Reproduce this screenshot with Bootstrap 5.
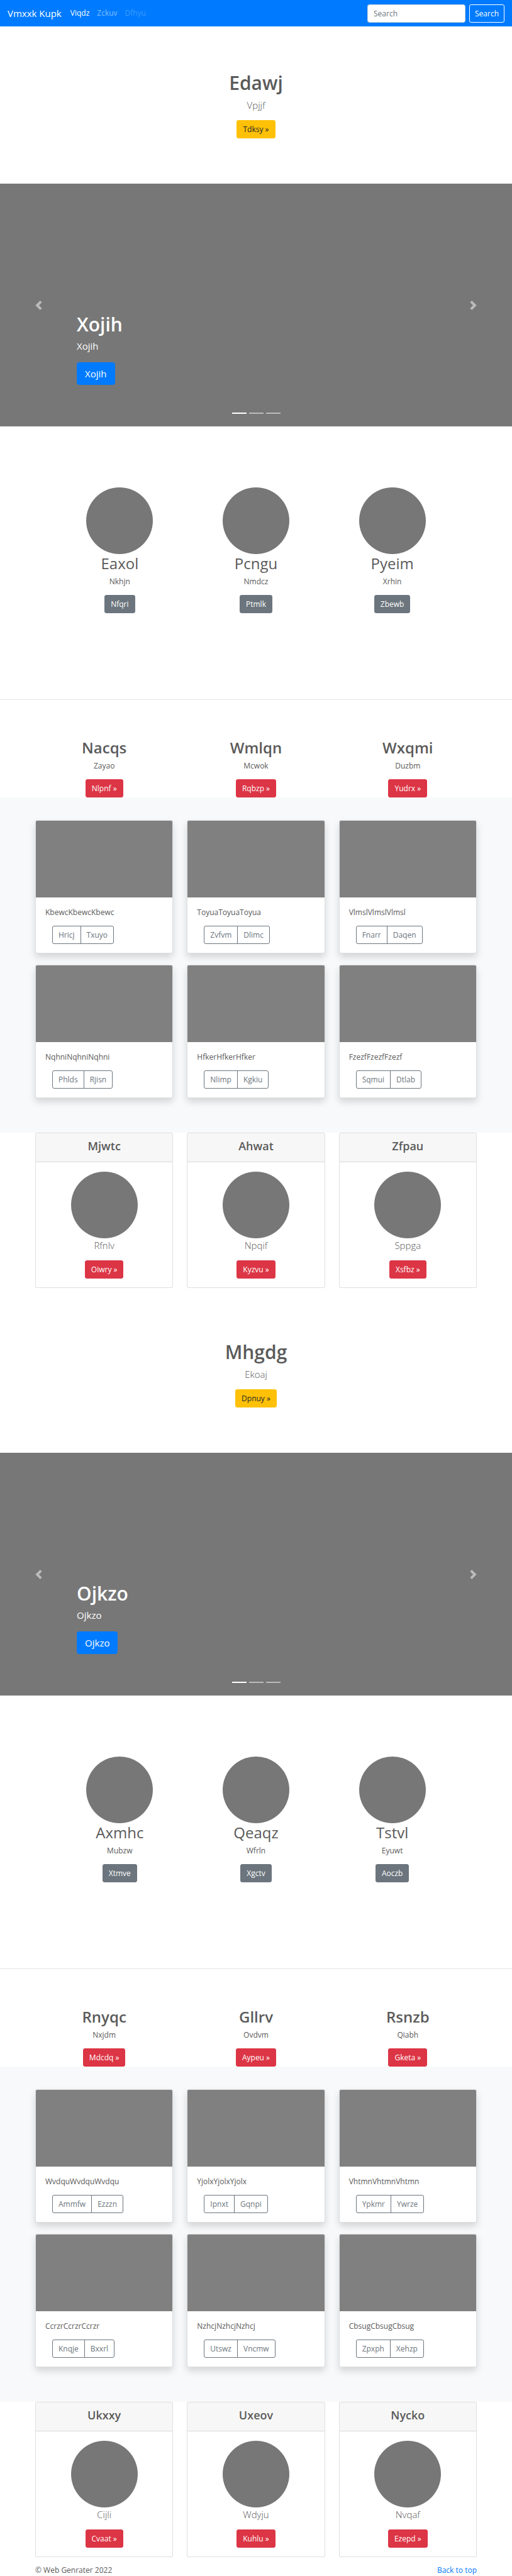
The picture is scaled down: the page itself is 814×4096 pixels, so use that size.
<!DOCTYPE html>
<html lang="en">
<head>
<meta charset="utf-8">
<meta name="viewport" content="width=device-width, initial-scale=1">
<title>Vmxxk Kupk</title>
<link href="https://cdn.jsdelivr.net/npm/bootstrap@5.3.0/dist/css/bootstrap.min.css" rel="stylesheet">
<style>
html { font-size: 12px; }
body { font-family: "Open Sans", "Noto Sans", sans-serif; font-size: 12px; line-height: 18px; color: #5a5a5a; background: #fff; }
p { margin-bottom: 12px; }
.site-width { width: 100%; max-width: 724px; margin: 0 auto; padding: 0 11px; }
.row { --bs-gutter-x: 22px; }
h1 { font-size: 30px; line-height: 36px; font-weight: 600; margin-bottom: 6px; }
h2 { font-size: 24px; line-height: 29px; font-weight: 400; margin-bottom: 6px; }
.lead { font-size: 15px; line-height: 23px; font-weight: 300; }

.btn { font-size: 12px; line-height: 19px; padding: 4px 9px; border-radius: 3px; vertical-align: top; }
.btn-lg { font-size: 15px; line-height: 22px; padding: 6px 12px; border-radius: 4px; }
.btn-primary { background: #007bff; border-color: #007bff; }
.btn-warning { background: #ffc107; border-color: #ffc107; color: #212529; }
.btn-danger { background: #dc3545; border-color: #dc3545; }
.btn-secondary { background: #6c757d; border-color: #6c757d; }

.top-bar { background: #007bff; padding: 6px 12px; height: 42px; }
.top-bar .navbar-brand { font-size: 15px; line-height: 22px; padding: 4px 0; margin-right: 8px; }
.top-bar .nav-link { padding: 6px; color: rgba(255,255,255,.5); }
.top-bar .nav-link.active { color: #fff; }
.top-bar .nav-link.disabled { color: rgba(255,255,255,.25); }
.top-bar .form-control { font-size: 12px; line-height: 19px; padding: 4px 9px; width: 156px; border-color: #ced4da; border-radius: 3px; }
.top-bar .form-control::placeholder { color: #6c757d; }
.top-bar .btn { padding: 4px 8px; }

.hero { padding: 72px 0; }

.slider { background: #777; height: 386px; }
.slider .carousel-caption { left: 15%; right: 15%; bottom: 66px; padding: 0; text-align: left; }
.slider .carousel-caption p { font-size: 15px; line-height: 21px; margin-bottom: 15px; }
.slider .carousel-control-prev svg, .slider .carousel-control-next svg { width: 15px; height: 15px; fill: #fff; }
.slider .carousel-indicators { margin-bottom: 12px; gap: 4px; }
.slider .carousel-indicators [data-bs-target] { width: 23px; height: 2px; margin: 0; border-top: 8px solid transparent; border-bottom: 8px solid transparent; }

.dot { display: block; width: 106px; height: 106px; margin: 0 auto; fill: #777; }
.people { padding: 97px 0 137px; }
.people .row { max-width: 650px; margin: 0 auto; }
.divider { margin: 0 0 61px; border-top: 1px solid #e5e5e5; opacity: 1; }
.topics h2 { font-weight: 600; }

.album { background: #f8f9fa; padding: 36px 0 37px; }
.album .card { margin-bottom: 18px; border-radius: 3px; border-color: rgba(0,0,0,.125); box-shadow: 0 6px 12px rgba(0,0,0,.15); }
.thumb { display: block; width: 100%; height: 122px; background: gray; border-radius: 2px 2px 0 0; }
.album .card-body { padding: 15px 15px 14px; }
.album .btn-group { margin-left: 11px; }
.album .btn { color: #6c757d; border-color: #6c757d; }

.plans .card { border-radius: 3px; border-color: rgba(0,0,0,.125); margin-bottom: 12px; }
.plans .card-header { padding: 9px 15px 8px; background: #f7f7f7; border-color: rgba(0,0,0,.125); }
.plans h4 { font-size: 18px; line-height: 22px; font-weight: 600; margin-bottom: 6px; }
.plans .card-body { padding: 15px 15px 14px; }
footer a { color: #007bff; text-decoration: none; }
</style>
</head>
<body>
<svg class="d-none" aria-hidden="true">
  <symbol id="circle" viewBox="0 0 100 100"><circle cx="50" cy="50" r="50"/></symbol>
  <symbol id="prev" viewBox="0 0 8 8"><path d="M5.25 0l-4 4 4 4 1.5-1.5L4.25 4l2.5-2.5L5.25 0z"/></symbol>
  <symbol id="next" viewBox="0 0 8 8"><path d="M2.75 0l-1.5 1.5L3.75 4l-2.5 2.5L2.75 8l4-4-4-4z"/></symbol>
</svg>

<nav class="navbar navbar-expand top-bar" id="top" data-bs-theme="dark">
  <a class="navbar-brand text-white" href="#">Vmxxk Kupk</a>
  <ul class="navbar-nav me-auto">
    <li class="nav-item"><a class="nav-link active" href="#">Viqdz</a></li>
    <li class="nav-item"><a class="nav-link" href="#">Zckuv</a></li>
    <li class="nav-item"><a class="nav-link disabled" href="#" aria-disabled="true">Dfhyu</a></li>
  </ul>
  <form class="d-flex" role="search" data-bs-theme="light">
    <input class="form-control me-2" type="search" placeholder="Search" aria-label="Search">
    <button class="btn btn-outline-light border-white text-white" type="button">Search</button>
  </form>
</nav>

<main>
  <section class="hero text-center">
    <h1>Edawj</h1>
    <p class="lead">Vpjjf</p>
    <a class="btn btn-warning" href="#">Tdksy »</a>
  </section>

  <section class="carousel slider" id="slider1">
    <div class="carousel-indicators">
      <button type="button" class="active" data-bs-target="#slider1" data-bs-slide-to="0" aria-label="Slide 1"></button>
      <button type="button" data-bs-target="#slider1" data-bs-slide-to="1" aria-label="Slide 2"></button>
      <button type="button" data-bs-target="#slider1" data-bs-slide-to="2" aria-label="Slide 3"></button>
    </div>
    <div class="carousel-caption">
      <h1>Xojih</h1>
      <p>Xojih</p>
      <a class="btn btn-lg btn-primary" href="#">Xojih</a>
    </div>
    <button class="carousel-control-prev" type="button" aria-label="Previous"><svg><use href="#prev"/></svg></button>
    <button class="carousel-control-next" type="button" aria-label="Next"><svg><use href="#next"/></svg></button>
  </section>

  <section class="site-width people text-center">
    <div class="row">
      <div class="col-4"><svg class="dot"><use href="#circle"/></svg><h2>Eaxol</h2><p>Nkhjn</p><a class="btn btn-secondary" href="#">Nfqri</a></div>
      <div class="col-4"><svg class="dot"><use href="#circle"/></svg><h2>Pcngu</h2><p>Nmdcz</p><a class="btn btn-secondary" href="#">Ptmlk</a></div>
      <div class="col-4"><svg class="dot"><use href="#circle"/></svg><h2>Pyeim</h2><p>Xrhin</p><a class="btn btn-secondary" href="#">Zbewb</a></div>
    </div>
  </section>
  <hr class="divider">

  <section class="site-width topics text-center">
    <div class="row">
      <div class="col-4"><h2>Nacqs</h2><p>Zayao</p><a class="btn btn-danger" href="#">Nlpnf »</a></div>
      <div class="col-4"><h2>Wmlqn</h2><p>Mcwok</p><a class="btn btn-danger" href="#">Rqbzp »</a></div>
      <div class="col-4"><h2>Wxqmi</h2><p>Duzbm</p><a class="btn btn-danger" href="#">Yudrx »</a></div>
    </div>
  </section>

  <section class="album">
    <div class="site-width">
      <div class="row">
        <div class="col-4"><div class="card"><div class="thumb"></div><div class="card-body"><p>KbewcKbewcKbewc</p><div class="btn-group"><button type="button" class="btn btn-outline-secondary">Hricj</button><button type="button" class="btn btn-outline-secondary">Txuyo</button></div></div></div></div>
        <div class="col-4"><div class="card"><div class="thumb"></div><div class="card-body"><p>ToyuaToyuaToyua</p><div class="btn-group"><button type="button" class="btn btn-outline-secondary">Zvfvm</button><button type="button" class="btn btn-outline-secondary">Dlimc</button></div></div></div></div>
        <div class="col-4"><div class="card"><div class="thumb"></div><div class="card-body"><p>VlmslVlmslVlmsl</p><div class="btn-group"><button type="button" class="btn btn-outline-secondary">Fnarr</button><button type="button" class="btn btn-outline-secondary">Daqen</button></div></div></div></div>
        <div class="col-4"><div class="card"><div class="thumb"></div><div class="card-body"><p>NqhniNqhniNqhni</p><div class="btn-group"><button type="button" class="btn btn-outline-secondary">Phlds</button><button type="button" class="btn btn-outline-secondary">Rjisn</button></div></div></div></div>
        <div class="col-4"><div class="card"><div class="thumb"></div><div class="card-body"><p>HfkerHfkerHfker</p><div class="btn-group"><button type="button" class="btn btn-outline-secondary">Nlimp</button><button type="button" class="btn btn-outline-secondary">Kgkiu</button></div></div></div></div>
        <div class="col-4"><div class="card"><div class="thumb"></div><div class="card-body"><p>FzezfFzezfFzezf</p><div class="btn-group"><button type="button" class="btn btn-outline-secondary">Sqmui</button><button type="button" class="btn btn-outline-secondary">Dtlab</button></div></div></div></div>
      </div>
    </div>
  </section>

  <section class="site-width plans text-center">
    <div class="row">
      <div class="col-4"><div class="card"><div class="card-header"><h4>Mjwtc</h4></div><div class="card-body"><svg class="dot"><use href="#circle"/></svg><p class="lead">Rfnlv</p><a class="btn btn-danger" href="#">Oiwry »</a></div></div></div>
      <div class="col-4"><div class="card"><div class="card-header"><h4>Ahwat</h4></div><div class="card-body"><svg class="dot"><use href="#circle"/></svg><p class="lead">Npqif</p><a class="btn btn-danger" href="#">Kyzvu »</a></div></div></div>
      <div class="col-4"><div class="card"><div class="card-header"><h4>Zfpau</h4></div><div class="card-body"><svg class="dot"><use href="#circle"/></svg><p class="lead">Sppga</p><a class="btn btn-danger" href="#">Xsfbz »</a></div></div></div>
    </div>
  </section>

  <section class="hero text-center">
    <h1>Mhgdg</h1>
    <p class="lead">Ekoaj</p>
    <a class="btn btn-warning" href="#">Dpnuy »</a>
  </section>

  <section class="carousel slider" id="slider2">
    <div class="carousel-indicators">
      <button type="button" class="active" data-bs-target="#slider2" data-bs-slide-to="0" aria-label="Slide 1"></button>
      <button type="button" data-bs-target="#slider2" data-bs-slide-to="1" aria-label="Slide 2"></button>
      <button type="button" data-bs-target="#slider2" data-bs-slide-to="2" aria-label="Slide 3"></button>
    </div>
    <div class="carousel-caption">
      <h1>Ojkzo</h1>
      <p>Ojkzo</p>
      <a class="btn btn-lg btn-primary" href="#">Ojkzo</a>
    </div>
    <button class="carousel-control-prev" type="button" aria-label="Previous"><svg><use href="#prev"/></svg></button>
    <button class="carousel-control-next" type="button" aria-label="Next"><svg><use href="#next"/></svg></button>
  </section>

  <section class="site-width people text-center">
    <div class="row">
      <div class="col-4"><svg class="dot"><use href="#circle"/></svg><h2>Axmhc</h2><p>Mubzw</p><a class="btn btn-secondary" href="#">Xtmve</a></div>
      <div class="col-4"><svg class="dot"><use href="#circle"/></svg><h2>Qeaqz</h2><p>Wfrln</p><a class="btn btn-secondary" href="#">Xgctv</a></div>
      <div class="col-4"><svg class="dot"><use href="#circle"/></svg><h2>Tstvl</h2><p>Eyuwt</p><a class="btn btn-secondary" href="#">Aoczb</a></div>
    </div>
  </section>
  <hr class="divider">

  <section class="site-width topics text-center">
    <div class="row">
      <div class="col-4"><h2>Rnyqc</h2><p>Nxjdm</p><a class="btn btn-danger" href="#">Mdcdq »</a></div>
      <div class="col-4"><h2>Gllrv</h2><p>Ovdvm</p><a class="btn btn-danger" href="#">Aypeu »</a></div>
      <div class="col-4"><h2>Rsnzb</h2><p>Qiabh</p><a class="btn btn-danger" href="#">Gketa »</a></div>
    </div>
  </section>

  <section class="album">
    <div class="site-width">
      <div class="row">
        <div class="col-4"><div class="card"><div class="thumb"></div><div class="card-body"><p>WvdquWvdquWvdqu</p><div class="btn-group"><button type="button" class="btn btn-outline-secondary">Ammfw</button><button type="button" class="btn btn-outline-secondary">Ezzzn</button></div></div></div></div>
        <div class="col-4"><div class="card"><div class="thumb"></div><div class="card-body"><p>YjolxYjolxYjolx</p><div class="btn-group"><button type="button" class="btn btn-outline-secondary">Ipnxt</button><button type="button" class="btn btn-outline-secondary">Gqnpi</button></div></div></div></div>
        <div class="col-4"><div class="card"><div class="thumb"></div><div class="card-body"><p>VhtmnVhtmnVhtmn</p><div class="btn-group"><button type="button" class="btn btn-outline-secondary">Ypkmr</button><button type="button" class="btn btn-outline-secondary">Ywrze</button></div></div></div></div>
        <div class="col-4"><div class="card"><div class="thumb"></div><div class="card-body"><p>CcrzrCcrzrCcrzr</p><div class="btn-group"><button type="button" class="btn btn-outline-secondary">Knqje</button><button type="button" class="btn btn-outline-secondary">Bxxrl</button></div></div></div></div>
        <div class="col-4"><div class="card"><div class="thumb"></div><div class="card-body"><p>NzhcjNzhcjNzhcj</p><div class="btn-group"><button type="button" class="btn btn-outline-secondary">Utswz</button><button type="button" class="btn btn-outline-secondary">Vncmw</button></div></div></div></div>
        <div class="col-4"><div class="card"><div class="thumb"></div><div class="card-body"><p>CbsugCbsugCbsug</p><div class="btn-group"><button type="button" class="btn btn-outline-secondary">Zpxph</button><button type="button" class="btn btn-outline-secondary">Xehzp</button></div></div></div></div>
      </div>
    </div>
  </section>

  <section class="site-width plans text-center">
    <div class="row">
      <div class="col-4"><div class="card"><div class="card-header"><h4>Ukxxy</h4></div><div class="card-body"><svg class="dot"><use href="#circle"/></svg><p class="lead">Cijli</p><a class="btn btn-danger" href="#">Cvaat »</a></div></div></div>
      <div class="col-4"><div class="card"><div class="card-header"><h4>Uxeov</h4></div><div class="card-body"><svg class="dot"><use href="#circle"/></svg><p class="lead">Wdyju</p><a class="btn btn-danger" href="#">Kuhlu »</a></div></div></div>
      <div class="col-4"><div class="card"><div class="card-header"><h4>Nycko</h4></div><div class="card-body"><svg class="dot"><use href="#circle"/></svg><p class="lead">Nvqaf</p><a class="btn btn-danger" href="#">Ezepd »</a></div></div></div>
    </div>
  </section>
</main>

<footer class="site-width d-flex justify-content-between">
  <span>© Web Genrater 2022</span>
  <a href="#top">Back to top</a>
</footer>
<script src="https://cdn.jsdelivr.net/npm/bootstrap@5.3.0/dist/js/bootstrap.bundle.min.js"></script>
</body>
</html>
